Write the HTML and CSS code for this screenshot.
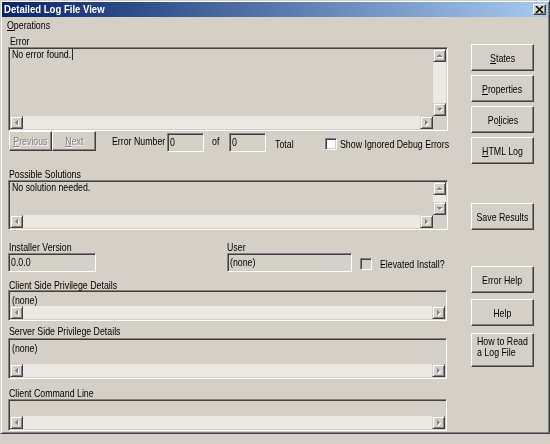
FILE: index.html
```html
<!DOCTYPE html>
<html>
<head>
<meta charset="utf-8">
<title>Detailed Log File View</title>
<link rel="stylesheet" href="styles.css">
</head>
<body>
<svg class="defs" width="0" height="0">
  <symbol id="al" viewBox="0 0 11 11"><polygon points="5,6.5 8,3.5 8,9.5" fill="#fff"/><polygon points="4,5.5 7,2.5 7,8.5" fill="#808080"/></symbol>
  <symbol id="ar" viewBox="0 0 11 11"><polygon points="8,6.5 5,3.5 5,9.5" fill="#fff"/><polygon points="7,5.5 4,2.5 4,8.5" fill="#808080"/></symbol>
  <symbol id="au" viewBox="0 0 11 11"><polygon points="6.5,5 3.5,8 9.5,8" fill="#fff"/><polygon points="5.5,4 2.5,7 8.5,7" fill="#808080"/></symbol>
  <symbol id="ad" viewBox="0 0 11 11"><polygon points="6.5,8 3.5,5 9.5,5" fill="#fff"/><polygon points="5.5,7 2.5,4 8.5,4" fill="#808080"/></symbol>
</svg>
<div class="window">
  <div class="titlebar">
    <span class="title"><span class="t">Detailed Log File View</span></span>
    <span class="close"><svg width="9" height="7" viewBox="0 0 9 7"><path d="M1 0 L8 7 M8 0 L1 7" stroke="#000" stroke-width="1.6"/></svg></span>
  </div>
  <div class="menubar"><span class="t"><u>O</u>perations</span></div>
  <div class="main">
    <div class="left">
      <div class="lbl lbl-error"><span class="t">Error</span></div>
      <div class="field sunken field-error">
        <div class="content c-error"><span class="t">No error found.<span class="caret"></span></span></div>
        <div class="vscroll"><span class="sbtn"><svg><use href="#au"/></svg></span><span class="track"></span><span class="sbtn"><svg><use href="#ad"/></svg></span></div>
        <div class="hscroll"><span class="sbtn"><svg><use href="#al"/></svg></span><span class="track"></span><span class="sbtn"><svg><use href="#ar"/></svg></span></div>
        <div class="corner"></div>
      </div>

      <div class="navrow">
        <div class="btn btn-prev disabled"><span class="t"><u>P</u>revious</span></div>
        <div class="btn btn-next disabled"><span class="t"><u>N</u>ext</span></div>
        <span class="nav-lbl lbl-errnum"><span class="t">Error Number</span></span>
        <div class="edit sunken edit-num"><span class="t">0</span></div>
        <span class="nav-lbl lbl-of"><span class="t">of</span></span>
        <div class="edit sunken edit-num"><span class="t">0</span></div>
        <span class="nav-lbl lbl-total"><span class="t">Total</span></span>
        <span class="check check-show"></span>
        <span class="nav-lbl lbl-show"><span class="t">Show Ignored Debug Errors</span></span>
      </div>

      <div class="lbl lbl-sol"><span class="t">Possible Solutions</span></div>
      <div class="field sunken field-sol">
        <div class="content c-sol"><span class="t">No solution needed.</span></div>
        <div class="vscroll"><span class="sbtn"><svg><use href="#au"/></svg></span><span class="track"></span><span class="sbtn"><svg><use href="#ad"/></svg></span></div>
        <div class="hscroll"><span class="sbtn"><svg><use href="#al"/></svg></span><span class="track"></span><span class="sbtn"><svg><use href="#ar"/></svg></span></div>
        <div class="corner"></div>
      </div>

      <div class="inforow">
        <div class="group g-ver">
          <div class="lbl"><span class="t">Installer Version</span></div>
          <div class="edit sunken"><span class="t">0.0.0</span></div>
        </div>
        <div class="group g-user">
          <div class="lbl lbl-user"><span class="t">User</span></div>
          <div class="edit sunken"><span class="t">(none)</span></div>
        </div>
        <div class="elev"><span class="check check-elev"></span><span class="elev-text"><span class="t">Elevated Install?</span></span></div>
      </div>

      <div class="lbl lbl-client"><span class="t">Client Side Privilege Details</span></div>
      <div class="field sunken field-priv field-client">
        <div class="content c-priv"><span class="t">(none)</span></div>
        <div class="hscroll"><span class="sbtn"><svg><use href="#al"/></svg></span><span class="track"></span><span class="sbtn"><svg><use href="#ar"/></svg></span></div>
      </div>

      <div class="lbl lbl-server"><span class="t">Server Side Privilege Details</span></div>
      <div class="field sunken field-priv field-server">
        <div class="content c-priv"><span class="t">(none)</span></div>
        <div class="hscroll"><span class="sbtn"><svg><use href="#al"/></svg></span><span class="track"></span><span class="sbtn"><svg><use href="#ar"/></svg></span></div>
      </div>

      <div class="lbl lbl-cmd"><span class="t">Client Command Line</span></div>
      <div class="field sunken field-priv field-cmd">
        <div class="content c-priv"></div>
        <div class="hscroll"><span class="sbtn"><svg><use href="#al"/></svg></span><span class="track"></span><span class="sbtn"><svg><use href="#ar"/></svg></span></div>
      </div>
    </div>

    <div class="right">
      <div class="btn rbtn b-states"><span class="t"><u>S</u>tates</span></div>
      <div class="btn rbtn b-props"><span class="t"><u>P</u>roperties</span></div>
      <div class="btn rbtn b-pol"><span class="t">Po<u>l</u>icies</span></div>
      <div class="btn rbtn b-html"><span class="t"><u>H</u>TML Log</span></div>
      <div class="btn rbtn b-save"><span class="t">Save Results</span></div>
      <div class="btn rbtn b-errhelp"><span class="t">Error Help</span></div>
      <div class="btn rbtn b-help"><span class="t">Help</span></div>
      <div class="btn rbtn b-howto"><span class="t">How to Read<br>a Log File</span></div>
    </div>
  </div>
</div>
</body>
</html>
```
FILE: styles.css
```css
* { box-sizing: border-box; }
html, body { margin: 0; padding: 0; }
body {
  width: 550px;
  height: 444px;
  overflow: hidden;
  background: #D4D0C8;
  font-family: "Liberation Sans", Arial, sans-serif;
  font-size: 11px;
  color: #000;
}
.defs { position: absolute; width: 0; height: 0; overflow: hidden; }

/* narrow system font look */
.t {
  display: inline-block;
  white-space: nowrap;
  transform: scaleX(0.8);
  transform-origin: 0 50%;
}
.btn .t { transform-origin: 50% 50%; }
.b-howto .t { transform-origin: 0 50%; }

.window {
  width: 550px;
  height: 434px;
  background: #D4D0C8;
  border: 1px solid;
  border-color: #D4D0C8 #404040 #404040 #D4D0C8;
  box-shadow: inset 1px 1px #fff, inset -1px -1px #808080;
  padding: 1px;
}

.titlebar {
  height: 15px;
  background: linear-gradient(to right, #0A246A, #A6CAF0);
  display: flex;
  align-items: center;
  justify-content: space-between;
  padding: 0 2px 0 2px;
}
.title {
  color: #fff;
  font-weight: bold;
  font-size: 11.5px;
  line-height: 15px;
  white-space: nowrap;
}
.title .t { transform: scaleX(0.83); }
.close {
  width: 13px;
  height: 11px;
  background: #D4D0C8;
  border: 1px solid;
  border-color: #fff #404040 #404040 #fff;
  box-shadow: inset -1px -1px #808080;
  display: flex;
  align-items: center;
  justify-content: center;
}
.close svg { display: block; }

.menubar {
  height: 16px;
  line-height: 16px;
  padding-left: 5px;
}

.main {
  display: flex;
  padding-left: 6px;
}
.left { width: 440px; flex: none; display: flex; flex-direction: column; }
.right { width: 63px; flex: none; margin-left: 23px; display: flex; flex-direction: column; }

.lbl { height: 12px; line-height: 12px; white-space: nowrap; padding-left: 1px; }
.lbl-error { margin-top: 2px; padding-left: 2px; }
.lbl-sol { margin-top: 16px; }
.lbl-client { margin-top: 7px; height: 11px; }
.lbl-server { margin-top: 4px; height: 13px; }
.lbl-cmd { margin-top: 8px; }

.sunken {
  border: 1px solid;
  border-color: #808080 #fff #fff #808080;
  box-shadow: inset 1px 1px #404040, inset -1px -1px #D4D0C8;
  padding: 1px;
  background: #D4D0C8;
}

.field { display: grid; flex: none; }
.field-error { height: 84px; grid-template-columns: 1fr 13px; grid-template-rows: 1fr 13px; }
.field-sol { height: 50px; grid-template-columns: 1fr 13px; grid-template-rows: 1fr 13px; }
.field-priv { grid-template-columns: 1fr; grid-template-rows: 1fr 13px; width: 439px; }
.field-client { height: 31px; }
.field-server { height: 41px; }
.field-cmd { height: 32px; }

.content { padding: 0 2px; white-space: nowrap; overflow: hidden; min-width: 0; }
.c-error, .c-sol { line-height: 11px; }
.c-priv { line-height: 13px; padding-top: 2px; }
.caret {
  display: inline-block;
  width: 1px;
  height: 11px;
  background: #000;
  margin-left: 1px;
  vertical-align: -2px;
}

.hscroll { display: flex; height: 13px; min-width: 0; }
.vscroll { display: flex; flex-direction: column; width: 13px; }
.track { flex: 1; background: #EBE9E4; }
.corner { background: #D4D0C8; }
.sbtn {
  flex: none;
  width: 13px;
  height: 13px;
  background: #D4D0C8;
  border: 1px solid;
  border-color: #D4D0C8 #404040 #404040 #D4D0C8;
  box-shadow: inset 1px 1px #fff, inset -1px -1px #808080;
}
.sbtn svg { display: block; width: 11px; height: 11px; }

.btn {
  display: flex;
  align-items: center;
  justify-content: center;
  background: #D4D0C8;
  border: 1px solid;
  border-color: #fff #404040 #404040 #fff;
  box-shadow: inset -1px -1px #808080;
  white-space: nowrap;
  overflow: visible;
}
.disabled { color: #808080; text-shadow: 1px 1px #fff; }

.navrow { display: flex; align-items: flex-start; height: 21px; flex: none; }
.navrow > * { flex: none; }
.btn-prev { margin-left: 1px; width: 43px; height: 20px; }
.btn-next { width: 44px; height: 20px; }
.nav-lbl { line-height: 20px; white-space: nowrap; }
.lbl-errnum { margin-left: 16px; width: 55px; }
.edit { height: 19px; line-height: 15px; padding-left: 2px; white-space: nowrap; overflow: hidden; }
.edit-num { width: 37px; margin-top: 2px; }
.lbl-of { margin-left: 8px; width: 17px; }
.lbl-total { margin-left: 9px; width: 50px; margin-top: 3px; }
.lbl-show { margin-left: 3px; margin-top: 3px; }

.check {
  flex: none;
  display: block;
  width: 12px;
  height: 12px;
  border: 1px solid;
  border-color: #808080 #fff #fff #808080;
  box-shadow: inset 1px 1px #404040, inset -1px -1px #D4D0C8;
  background: #fff;
}
.check-show { margin-top: 7px; }
.check-elev { background: #D4D0C8; }

.inforow { display: flex; align-items: flex-start; margin-top: 11px; flex: none; }
.inforow > * { flex: none; }
.group { display: flex; flex-direction: column; }
.g-ver { width: 88px; }
.g-user { width: 125px; margin-left: 131px; }
.lbl-user { padding-left: 0; }
.elev { display: flex; align-items: center; height: 16px; margin-top: 15px; margin-left: 8px; }
.elev-text { margin-left: 8px; white-space: nowrap; }

.rbtn { height: 27px; flex: none; }
.b-states { margin-top: 11px; }
.b-props, .b-pol, .b-html { margin-top: 4px; }
.b-save { margin-top: 39px; }
.b-errhelp { margin-top: 36px; }
.b-help { margin-top: 6px; }
.b-howto {
  margin-top: 7px;
  height: 34px;
  align-items: flex-start;
  justify-content: flex-start;
  padding: 2px 0 0 5px;
  line-height: 11px;
}
```
